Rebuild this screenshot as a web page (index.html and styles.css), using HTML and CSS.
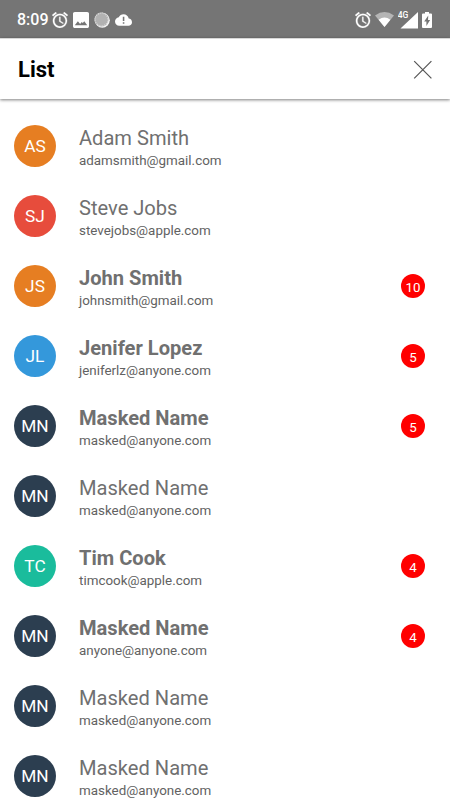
FILE: index.html
```html
<!DOCTYPE html>
<html lang="en">
<head>
<meta charset="utf-8">
<title>List</title>
<link rel="stylesheet" href="styles.css">
</head>
<body>
<svg class="defs" width="0" height="0">
  <symbol id="alarm" viewBox="2 1.86 20 20.2"><path fill="currentColor" stroke="currentColor" stroke-width=".3" d="M22 5.72l-4.6-3.86-1.29 1.53 4.6 3.86L22 5.72zM7.88 3.39L6.6 1.86 2 5.71l1.29 1.53 4.59-3.85zM12.5 8H11v6l4.75 2.85.75-1.23-4-2.37V8zM12 4c-4.97 0-9 4.03-9 9s4.02 9 9 9a9 9 0 0 0 0-18zm0 16c-3.87 0-7-3.13-7-7s3.13-7 7-7 7 3.13 7 7-3.13 7-7 7z"/></symbol>
</svg>
<div class="status">
  <div class="group left">
    <span class="time">8:09</span>
    <svg width="16" height="16"><use href="#alarm"/></svg>
    <svg width="16" height="16" viewBox="3 3 18 18"><path fill="currentColor" d="M21 19V5c0-1.100-.9-2-2-2H5c-1.100 0-2 .9-2 2v14c0 1.100.9 2 2 2h14c1.100 0 2-.9 2-2zM5 18l3.500-4.500 2.500 3 1.800-2.300 1.200 1.300 1.700-2L19 18z"/></svg>
    <svg width="16" height="16" viewBox="0 0 16 16"><circle cx="8.300" cy="8.300" r="7.500" fill="#f4f4f4"/><circle cx="7.500" cy="7.500" r="7" fill="#b2b2b2"/><circle cx="7.500" cy="7.500" r="6.500" fill="none" stroke="#dedede" stroke-width="1.200" stroke-dasharray="1 1"/></svg>
    <svg width="17" height="12" viewBox="0 4 24 16"><path fill="currentColor" fill-rule="evenodd" d="M19.350 10.040C18.670 6.590 15.640 4 12 4 9.110 4 6.600 5.640 5.350 8.040 2.340 8.360 0 10.910 0 14c0 3.310 2.690 6 6 6h13c2.760 0 5-2.240 5-5 0-2.640-2.050-4.780-4.650-4.960zM11 7.500h2.200v6H11zM11 15h2.200v2.200H11z"/></svg>
  </div>
  <div class="group right">
    <svg width="16" height="16"><use href="#alarm"/></svg>
    <svg class="wifi" width="19" height="15" viewBox="0 0 19 15"><path fill="#b5b5b5" d="M0 3.400Q9.500-3.400 19 3.400L9.500 15z"/><path fill="currentColor" d="M3.600 7.700Q9.500 3.300 15.400 7.700L9.500 15z"/></svg>
    <svg class="signal" width="20" height="18" viewBox="0 0 20 18"><path fill="currentColor" d="M2.500 17.500L20 1V17.500z"/><path fill="#757575" d="M0 0H12V8.500H0z"/><text x="-.3" y="7.200">4G</text></svg>
    <svg width="10" height="16" viewBox="0 0 10 16"><path fill="currentColor" fill-rule="evenodd" d="M3 0h4v1.500h2q1 0 1 1V15q0 1-1 1H1q-1 0-1-1V2.500q0-1 1-1h2zM6.300 3.500L2.200 9.500h2.200V14l3.700-6H6z"/></svg>
  </div>
</div>
<header class="header">
  <h1>List</h1>
  <svg width="20" height="20" viewBox="0 0 20 20"><path d="M1.200 1.200l17.200 17.200M18.400 1.200L1.200 18.400" stroke="#555" stroke-width="1.200" fill="none"/></svg>
</header>
<main class="list">
  <div class="row"><div class="avatar orange">AS</div><div class="info"><div class="name">Adam Smith</div><div class="email">adamsmith@gmail.com</div></div></div>
  <div class="row"><div class="avatar red">SJ</div><div class="info"><div class="name">Steve Jobs</div><div class="email">stevejobs@apple.com</div></div></div>
  <div class="row unread"><div class="avatar orange">JS</div><div class="info"><div class="name">John Smith</div><div class="email">johnsmith@gmail.com</div></div><div class="badge">10</div></div>
  <div class="row unread"><div class="avatar blue">JL</div><div class="info"><div class="name">Jenifer Lopez</div><div class="email">jeniferlz@anyone.com</div></div><div class="badge">5</div></div>
  <div class="row unread"><div class="avatar navy">MN</div><div class="info"><div class="name">Masked Name</div><div class="email">masked@anyone.com</div></div><div class="badge">5</div></div>
  <div class="row"><div class="avatar navy">MN</div><div class="info"><div class="name">Masked Name</div><div class="email">masked@anyone.com</div></div></div>
  <div class="row unread"><div class="avatar green">TC</div><div class="info"><div class="name">Tim Cook</div><div class="email">timcook@apple.com</div></div><div class="badge">4</div></div>
  <div class="row unread"><div class="avatar navy">MN</div><div class="info"><div class="name">Masked Name</div><div class="email">anyone@anyone.com</div></div><div class="badge">4</div></div>
  <div class="row"><div class="avatar navy">MN</div><div class="info"><div class="name">Masked Name</div><div class="email">masked@anyone.com</div></div></div>
  <div class="row"><div class="avatar navy">MN</div><div class="info"><div class="name">Masked Name</div><div class="email">masked@anyone.com</div></div></div>
</main>
</body>
</html>
```
FILE: styles.css
```css
* { box-sizing: border-box; }
body {
  margin: 0;
  height: 800px;
  overflow: hidden;
  background: #fff;
  font-family: Roboto, "Liberation Sans", sans-serif;
}
svg { display: block; flex: none; }
.defs { position: absolute; }
.status {
  height: 38px;
  padding: 1px 19px 0 17px;
  display: flex;
  justify-content: space-between;
  align-items: center;
  background: #757575;
  color: #fff;
}
.group { display: flex; align-items: center; }
.left { gap: 5px; }
.right { gap: 4px; margin-right: -1px; }
.time { width: 30px; font-size: 16px; line-height: 20px; font-weight: 500; white-space: nowrap; }
.signal text { font-size: 8.5px; font-weight: 500; fill: #fff; }
.header {
  height: 61px;
  padding: 1px 17px 0 18px;
  display: flex;
  align-items: center;
  justify-content: space-between;
  background: #fff;
  border-top: 1px solid #d8d8d8;
  box-shadow: 0 1px 3px rgba(0, 0, 0, .5);
}
h1 { margin: 0; font-size: 22px; line-height: 26px; font-weight: 700; color: #000; }
.list { padding-top: 12px; }
.row { height: 70px; padding: 0 25px 0 14px; display: flex; align-items: center; }
.avatar {
  width: 42px;
  height: 42px;
  border-radius: 50%;
  display: flex;
  align-items: center;
  justify-content: center;
  color: #fff;
  font-size: 17.3px;
  line-height: 42px;
}
.orange { background: #e67e22; }
.red { background: #e74c3c; }
.blue { background: #3498db; }
.navy { background: #2c3e50; }
.green { background: #1abc9c; }
.info { flex: 1; margin-left: 23px; padding-top: 4px; }
.name { font-size: 20.1px; line-height: 24px; color: #707070; }
.unread .name { font-weight: 700; }
.email { font-size: 13.4px; line-height: 21px; color: #626262; }
.badge {
  width: 24px;
  height: 24px;
  padding-top: 2px;
  border-radius: 50%;
  display: flex;
  align-items: center;
  justify-content: center;
  background: #f00;
  color: #fff;
  font-size: 13.3px;
}
```
